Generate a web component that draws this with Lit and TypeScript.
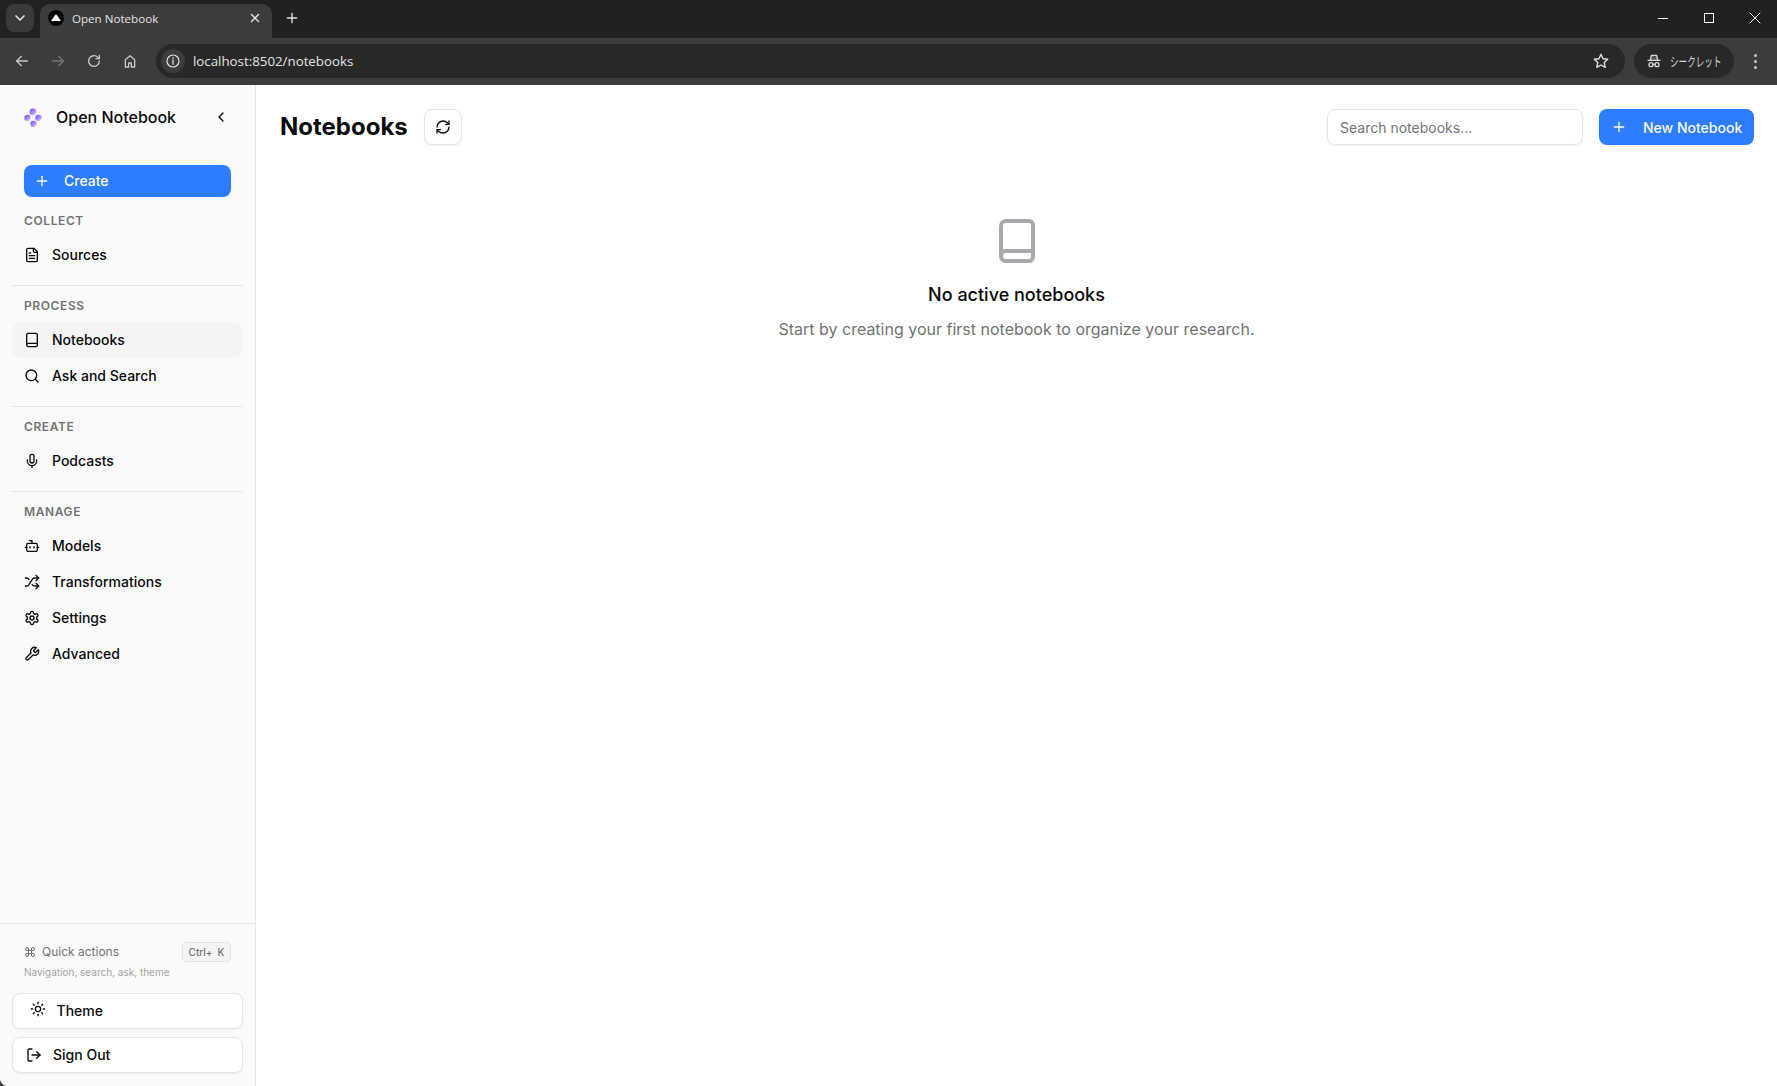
import { LitElement, html, css, svg } from "lit";
import { customElement } from "lit/decorators.js";

const ICONS: Record<string, any> = {
  file: svg`<path d="M15 2H6a2 2 0 0 0-2 2v16a2 2 0 0 0 2 2h12a2 2 0 0 0 2-2V7Z"/><path d="M14 2v4a2 2 0 0 0 2 2h4"/><path d="M10 9H8"/><path d="M16 13H8"/><path d="M16 17H8"/>`,
  book: svg`<path d="M4 19.5v-15A2.5 2.5 0 0 1 6.5 2H18a2 2 0 0 1 2 2v16a2 2 0 0 1-2 2H6.5A2.5 2.5 0 0 1 4 19.5v0A2.5 2.5 0 0 1 6.5 17H20"/>`,
  search: svg`<circle cx="11" cy="11" r="8"/><path d="m21 21-4.3-4.3"/>`,
  mic: svg`<path d="M12 2a3 3 0 0 0-3 3v7a3 3 0 0 0 6 0V5a3 3 0 0 0-3-3Z"/><path d="M19 10v2a7 7 0 0 1-14 0v-2"/><path d="M12 19v3"/>`,
  bot: svg`<path d="M12 8V4H8"/><rect x="4" y="8" width="16" height="12" rx="2"/><path d="M2 14h2"/><path d="M20 14h2"/><path d="M15 13v2"/><path d="M9 13v2"/>`,
  shuffle: svg`<path d="m18 14 4 4-4 4"/><path d="m18 2 4 4-4 4"/><path d="M2 18h1.973a4 4 0 0 0 3.3-1.7l5.454-8.6a4 4 0 0 1 3.3-1.7H22"/><path d="M2 6h1.972a4 4 0 0 1 3.6 2.2"/><path d="M22 18h-6.041a4 4 0 0 1-3.3-1.8l-.359-.45"/>`,
  gear: svg`<path d="M12.22 2h-.44a2 2 0 0 0-2 2v.18a2 2 0 0 1-1 1.73l-.43.25a2 2 0 0 1-2 0l-.15-.08a2 2 0 0 0-2.73.73l-.22.38a2 2 0 0 0 .73 2.73l.15.1a2 2 0 0 1 1 1.72v.51a2 2 0 0 1-1 1.74l-.15.09a2 2 0 0 0-.73 2.73l.22.38a2 2 0 0 0 2.73.73l.15-.08a2 2 0 0 1 2 0l.43.25a2 2 0 0 1 1 1.73V20a2 2 0 0 0 2 2h.44a2 2 0 0 0 2-2v-.18a2 2 0 0 1 1-1.73l.43-.25a2 2 0 0 1 2 0l.15.08a2 2 0 0 0 2.73-.73l.22-.39a2 2 0 0 0-.73-2.73l-.15-.08a2 2 0 0 1-1-1.74v-.5a2 2 0 0 1 1-1.74l.15-.09a2 2 0 0 0 .73-2.73l-.22-.38a2 2 0 0 0-2.73-.73l-.15.08a2 2 0 0 1-2 0l-.43-.25a2 2 0 0 1-1-1.73V4a2 2 0 0 0-2-2z"/><circle cx="12" cy="12" r="3"/>`,
  wrench: svg`<path d="M14.7 6.3a1 1 0 0 0 0 1.4l1.6 1.6a1 1 0 0 0 1.4 0l3.77-3.77a6 6 0 0 1-7.94 7.94l-6.91 6.91a2.12 2.12 0 0 1-3-3l6.91-6.91a6 6 0 0 1 7.94-7.94l-3.76 3.76z"/>`,
  sun: svg`<circle cx="12" cy="12" r="4"/><path d="M12 2v2"/><path d="M12 20v2"/><path d="m4.93 4.93 1.41 1.41"/><path d="m17.66 17.66 1.41 1.41"/><path d="M2 12h2"/><path d="M20 12h2"/><path d="m6.34 17.66-1.41 1.41"/><path d="m19.07 4.93-1.41 1.41"/>`,
  logout: svg`<path d="m16 17 5-5-5-5"/><path d="M21 12H9"/><path d="M9 21H5a2 2 0 0 1-2-2V5a2 2 0 0 1 2-2h4"/>`,
  refresh: svg`<path d="M3 12a9 9 0 0 1 9-9 9.75 9.75 0 0 1 6.74 2.74L21 8"/><path d="M21 3v5h-5"/><path d="M21 12a9 9 0 0 1-9 9 9.75 9.75 0 0 1-6.74-2.74L3 16"/><path d="M8 16H3v5"/>`,
  chevronLeft: svg`<path d="m15 18-6-6 6-6"/>`,
  chevronDown: svg`<path d="m6 9 6 6 6-6"/>`,
  command: svg`<path d="M15 6v12a3 3 0 1 0 3-3H6a3 3 0 1 0 3 3V6a3 3 0 1 0-3 3h12a3 3 0 1 0-3-3"/>`,
  plus: svg`<path d="M5 12h14"/><path d="M12 5v14"/>`,
  x: svg`<path d="M18 6 6 18"/><path d="m6 6 12 12"/>`,
  left: svg`<path d="M20 12H4.5"/><path d="m11 5-7 7 7 7"/>`,
  right: svg`<path d="M4 12h15.5"/><path d="m13 5 7 7-7 7"/>`,
  reload: svg`<path d="M20 12a8 8 0 1 1-2.5-5.8L20 8.5"/><path d="M20 3.5v5h-5"/>`,
  home: svg`<path d="M5 21V10l7-6 7 6v11h-5v-6h-4v6Z"/>`,
  info: svg`<circle cx="12" cy="12" r="9"/><path d="M12 11v6"/><path d="M12 7v1.5"/>`,
  star: svg`<path d="m12 3 2.7 6 6.3.7-4.7 4.3 1.3 6.5-5.6-3.2-5.6 3.2 1.3-6.5L3 9.700l6.300-.7Z"/>`,
  incognito: svg`<path d="M3 11h18"/><path d="M6.500 10.500 8 3.500h8l1.500 7" fill="currentColor" fill-opacity=".25"/><circle cx="7.500" cy="17.500" r="3"/><circle cx="16.500" cy="17.500" r="3"/><path d="M10.500 17h3"/>`,
};

const icon = (name: string, size = 16, sw = 2) => html`<svg class="ic" width=${size} height=${size} viewBox="0 0 24 24" fill="none" stroke="currentColor" stroke-width=${sw} stroke-linecap="round" stroke-linejoin="round">${ICONS[name]}</svg>`;

const SECTIONS = [
  { title: "COLLECT", items: [["file", "Sources"]] },
  { title: "PROCESS", items: [["book", "Notebooks"], ["search", "Ask and Search"]] },
  { title: "CREATE", items: [["mic", "Podcasts"]] },
  { title: "MANAGE", items: [["bot", "Models"], ["shuffle", "Transformations"], ["gear", "Settings"], ["wrench", "Advanced"]] },
];

@customElement("app-root")
export class AppRoot extends LitElement {
  static styles = css`
    :host { display: flex; flex-direction: column; height: 1086px; width: 1777px; overflow: hidden; background: #3c3c3c; font-family: Inter, "Liberation Sans", sans-serif; color: #0a0a0a; }
    * { box-sizing: border-box; }
    .ic { flex: none; display: block; }

    .tabstrip { height: 38px; flex: none; background: #202221; display: flex; align-items: flex-end; padding-left: 6px; color: #e3e3e3; }
    .tabmenu { width: 28px; height: 28px; margin-bottom: 6px; border-radius: 8px; background: #3a3a3a; display: flex; align-items: center; justify-content: center; }
    .tab { width: 232px; height: 34px; margin-left: 6px; background: #3c3c3c; border-radius: 10px 10px 0 0; display: flex; align-items: center; padding: 0 10px 6px 8px; gap: 8px; font: 11.6px "Open Sans", "Liberation Sans", sans-serif; color: #e3e3e3; }
    .fav { width: 16px; height: 16px; border-radius: 50%; background: #000; display: flex; align-items: center; justify-content: center; }
    .tri { width: 0; height: 0; border-left: 5px solid transparent; border-right: 5px solid transparent; border-bottom: 7px solid #fff; margin-top: -1px; }
    .tabtitle { flex: 1; }
    .newtab { margin: 0 0 12px 12px; width: 16px; }
    .winctl { margin-left: auto; display: flex; align-items: center; height: 38px; padding-right: 12px; padding-bottom: 2px; color: #fff; }
    .minbar { width: 10px; height: 1px; background: #fff; }
    .maxbox { width: 10px; height: 10px; border: 1px solid #fff; margin: 0 31px 0 36px; }
    .toolbar { height: 47px; flex: none; display: flex; align-items: center; background: #3c3c3c; border-top-left-radius: 8px; padding: 0 0 1px 14px; color: #c7c7c7; }
    .navs { display: flex; gap: 20px; width: 142px; align-items: center; }
    .dim { color: #757575; }
    .omni { flex: none; width: 1469px; height: 34px; border-radius: 17px; background: #282828; display: flex; align-items: center; padding: 0 15px 0 5px; color: #e3e3e3; font: 13.3px "Open Sans", "Liberation Sans", sans-serif; }
    .chip { width: 24px; height: 24px; border-radius: 50%; background: #3c3c3c; display: flex; align-items: center; justify-content: center; margin-right: 8px; }
    .url { flex: 1; }
    .incog { width: 100px; height: 34px; margin-left: 9px; border-radius: 17px; background: #282828; display: flex; align-items: center; padding-left: 12px; gap: 8px; font: 13px "Noto Sans CJK JP", sans-serif; color: #d8d8d8; white-space: nowrap; }
    .incog span { transform: scaleX(.66); transform-origin: left center; margin-bottom: 2px; }
    .dots { margin-left: 20px; display: flex; flex-direction: column; gap: 3px; }
    .dots i { width: 3px; height: 3px; border-radius: 50%; background: #c7c7c7; display: block; }

    .page { flex: 1; min-height: 0; display: flex; background: #fff; border-bottom-left-radius: 8px; overflow: hidden; }
    .side { width: 256px; flex: none; background: #fafafa; border-right: 1px solid #e5e5e5; display: flex; flex-direction: column; }
    .brand { height: 64px; display: flex; align-items: center; padding: 0 26px 0 24px; margin-bottom: 16px; }
    .brand .name { font-size: 16px; font-weight: 500; margin-left: 14px; flex: 1; }
    .create { height: 32px; margin: 0 24px; border-radius: 8px; background: #2f7dff; color: #fafafa; display: flex; align-items: center; padding-left: 10px; gap: 14px; font-size: 14px; font-weight: 500; }
    .create span, .item span, .fbtn span, .qa span { margin-bottom: 2px; }
    .nav { flex: 1; display: flex; flex-direction: column; }
    .sec { padding: 0 12px 12px; }
    .sec + .sec { border-top: 1px solid #e5e5e5; margin: 0 12px; padding: 12px 0 12px; }
    .sec:first-child { padding-top: 16px; }
    .sechead { height: 16px; line-height: 16px; padding-left: 12px; font-size: 12px; font-weight: 600; letter-spacing: 0.6px; color: #737373; margin: 0 0 8px; }
    .item { height: 36px; border-radius: 10px; display: flex; align-items: center; padding: 0 12px; gap: 12px; font-size: 14px; font-weight: 500; }
    .item.active { background: #f4f4f5; }
    .foot { border-top: 1px solid #e5e5e5; padding: 18px 12px 13px; }
    .qa { display: flex; align-items: center; padding: 0 12px; font-size: 12px; color: #737373; gap: 6px; height: 20px; }
    .qa span { flex: 1; }
    .kbd { height: 20px; width: 49px; border: 1px solid #e5e5e5; background: #f4f4f5; border-radius: 4px; font-size: 10px; font-weight: 500; display: flex; align-items: center; justify-content: center; gap: 5px; color: #737373; }
    .kbd i { font-style: normal; }
    .hint { padding: 0 12px; font-size: 10px; line-height: 14px; color: #a3a3a3; margin: 3px 0 14px; }
    .fbtn { height: 36px; background: #fff; border: 1px solid #e5e5e5; border-radius: 8px; box-shadow: 0 1px 2px rgba(0,0,0,.05); display: flex; align-items: center; font-size: 14px; font-weight: 500; }
    .fbtn + .fbtn { margin-top: 8px; }
    .theme { padding-left: 17px; gap: 10.5px; }
    .theme .ic { margin-top: -4px; }
    .signout { padding-left: 13px; gap: 11px; }

    .main { flex: 1; min-width: 0; display: flex; flex-direction: column; padding: 24px 24px 0; }
    .head { display: flex; align-items: center; height: 36px; gap: 16px; margin-right: -1px; }
    h1 { margin: 0; font-size: 24px; line-height: 32px; font-weight: 700; }
    .refresh { width: 38px; height: 36px; border: 1px solid #e5e5e5; border-radius: 8px; display: flex; align-items: center; justify-content: center; background: #fff; box-shadow: 0 1px 2px rgba(0,0,0,.05); }
    .spacer { flex: 1; }
    .searchbox { width: 256px; height: 36px; border: 1px solid #e5e5e5; border-radius: 8px; display: flex; align-items: center; padding: 0 12px; font-size: 14px; color: #737373; box-shadow: 0 1px 2px rgba(0,0,0,.05); }
    .newbtn { width: 155px; height: 36px; border-radius: 8px; background: #2f7dff; color: #fafafa; display: flex; align-items: center; padding-left: 12px; gap: 16px; font-size: 14px; font-weight: 500; }
    .empty { display: flex; flex-direction: column; align-items: center; padding-top: 72px; }
    .empty .ic { color: #a8a8af; }
    .empty h3 { margin: 16px 0 0; font-size: 18px; line-height: 28px; font-weight: 500; }
    .empty p { margin: 8px 0 0; font-size: 16px; line-height: 24px; color: #737373; }
  `;

  render() {
    return html`
      <div class="tabstrip">
        <div class="tabmenu">${icon("chevronDown", 16, 2.5)}</div>
        <div class="tab">
          <div class="fav"><div class="tri"></div></div>
          <span class="tabtitle">Open Notebook</span>
          ${icon("x", 14, 2.5)}
        </div>
        <div class="newtab">${icon("plus", 16, 2)}</div>
        <div class="winctl">
          <div class="minbar"></div>
          <div class="maxbox"></div>
          ${icon("x", 20, 1.2)}
        </div>
      </div>
      <div class="toolbar">
        <div class="navs">
          ${icon("left", 16)}
          <span class="dim">${icon("right", 16)}</span>
          ${icon("reload", 16)}
          ${icon("home", 16)}
        </div>
        <div class="omni">
          <div class="chip">${icon("info", 16, 1.8)}</div>
          <span class="url">localhost:8502/notebooks</span>
          ${icon("star", 18, 1.8)}
        </div>
        <div class="incog">${icon("incognito", 16, 2)}<span>シークレット</span></div>
        <div class="dots"><i></i><i></i><i></i></div>
      </div>
      <div class="page">
        <aside class="side">
          <div class="brand">
            <svg width="18" height="20" viewBox="0 0 18 20" class="ic">
              <defs>
                <linearGradient id="g" x1="0.1" y1="0" x2="0.9" y2="1"><stop offset="0" stop-color="#7c4dff"/><stop offset="0.55" stop-color="#a78bfa"/><stop offset="1" stop-color="#e0f2fe"/></linearGradient>
              </defs>
              <circle cx="9" cy="5" r="3.400" fill="url(#g)"/>
              <circle cx="3.500" cy="11" r="3.200" fill="url(#g)"/>
              <circle cx="14.500" cy="11" r="3.200" fill="url(#g)"/>
              <circle cx="9.500" cy="17" r="3.200" fill="url(#g)"/>
            </svg>
            <span class="name">Open Notebook</span>
            ${icon("chevronLeft", 16)}
          </div>
          <div class="create">${icon("plus", 16)}<span>Create</span></div>
          <nav class="nav">
            ${SECTIONS.map((s) => html`
              <div class="sec">
                <div class="sechead">${s.title}</div>
                ${s.items.map(([ic, label]) => html`
                  <div class="item ${label === "Notebooks" ? "active" : ""}">${icon(ic, 16)}<span>${label}</span></div>
                `)}
              </div>
            `)}
          </nav>
          <div class="foot">
            <div class="qa">${icon("command", 12)}<span>Quick actions</span><div class="kbd"><i>Ctrl+</i><i>K</i></div></div>
            <div class="hint">Navigation, search, ask, theme</div>
            <div class="fbtn theme">${icon("sun", 16)}<span>Theme</span></div>
            <div class="fbtn signout">${icon("logout", 16)}<span>Sign Out</span></div>
          </div>
        </aside>
        <main class="main">
          <div class="head">
            <h1>Notebooks</h1>
            <div class="refresh">${icon("refresh", 16)}</div>
            <div class="spacer"></div>
            <div class="searchbox">Search notebooks...</div>
            <div class="newbtn">${icon("plus", 16)}<span>New Notebook</span></div>
          </div>
          <div class="empty">
            ${icon("book", 48)}
            <h3>No active notebooks</h3>
            <p>Start by creating your first notebook to organize your research.</p>
          </div>
        </main>
      </div>
    `;
  }
}
